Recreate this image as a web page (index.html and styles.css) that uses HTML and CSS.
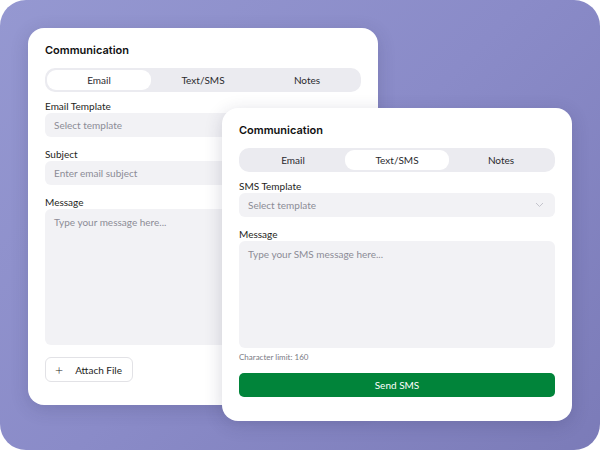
FILE: index.html
```html
<!DOCTYPE html>
<html>

<head>
    <title>Communication</title>
    <meta charset="utf-8">
    <link rel="stylesheet" href="styles.css">
</head>

<body>
    <div class="stage">
        <div class="card card-email">
            <h2 class="card-title">Communication</h2>
            <div class="tabs">
                <div class="tab active">Email</div>
                <div class="tab">Text/SMS</div>
                <div class="tab">Notes</div>
            </div>
            <label class="field-label first">Email Template</label>
            <div class="input">Select template</div>
            <label class="field-label">Subject</label>
            <div class="input">Enter email subject</div>
            <label class="field-label">Message</label>
            <div class="input textarea email-body">Type your message here...</div>
            <button class="attach-button" type="button"><span class="plus">+</span>Attach File</button>
        </div>

        <div class="card card-sms">
            <h2 class="card-title">Communication</h2>
            <div class="tabs">
                <div class="tab">Email</div>
                <div class="tab active">Text/SMS</div>
                <div class="tab">Notes</div>
            </div>
            <label class="field-label first">SMS Template</label>
            <div class="input select">
                <span>Select template</span>
                <svg class="chevron" width="9" height="6" viewBox="0 0 9 6">
                    <path d="M1 1l3.5 3.5L8 1" fill="none" stroke="#c4c4cc" stroke-width="1" />
                </svg>
            </div>
            <label class="field-label">Message</label>
            <div class="input textarea sms-body">Type your SMS message here...</div>
            <div class="hint">Character limit: 160</div>
            <button class="send-button" type="button">Send SMS</button>
        </div>
    </div>
</body>

</html>
```

FILE: styles.css
```css
:root {
    --card_width: 350px;
    --card_pad: 17px;
    --input_bg: #f2f2f5;
    --tab_bg: #ebebf0;
    --text_color: #1c1c1e;
    --muted_color: #8c8c96;
    --green: #01843a;
}

body {
    margin: 0px;
    background: #ffffff;
    font-family: Lato, "Noto Sans", sans-serif;
    color: var(--text_color);
}

.stage {
    position: relative;
    width: 600px;
    height: 450px;
    border-radius: 26px;
    overflow: hidden;
    background: linear-gradient(135deg, #9598d1 0%, #8a8bc8 50%, #7b7bb8 100%);
}

.card {
    position: absolute;
    width: var(--card_width);
    box-sizing: border-box;
    padding: 14px var(--card_pad) 0 var(--card_pad);
    background: #ffffff;
    border-radius: 16px;
    box-shadow: 0 4px 18px rgba(40, 40, 80, 0.18);
}

.card-email {
    left: 28px;
    top: 28px;
    height: 377px;
}

.card-sms {
    left: 222px;
    top: 108px;
    height: 313px;
}

.card-title {
    margin: 0;
    font-family: Inter, sans-serif;
    font-size: 11px;
    font-weight: 600;
    line-height: 16px;
    color: #111111;
}

.tabs {
    display: flex;
    margin-top: 10px;
    padding: 2px;
    height: 24px;
    box-sizing: border-box;
    background: var(--tab_bg);
    border-radius: 10px;
}

.tab {
    flex: 1;
    display: flex;
    align-items: center;
    justify-content: center;
    font-size: 10px;
    color: #2a2a2e;
    border-radius: 9px;
}

.tab.active {
    background: #ffffff;
}

.field-label {
    display: block;
    margin-top: 11px;
    font-size: 10px;
    line-height: 13px;
    color: #1e1e22;
}

.field-label.first {
    margin-top: 8px;
}

.input {
    display: flex;
    align-items: center;
    height: 24px;
    box-sizing: border-box;
    padding: 0 9px;
    background: var(--input_bg);
    border-radius: 6px;
    font-size: 10px;
    color: var(--muted_color);
}

.select {
    justify-content: space-between;
}

.chevron {
    margin-right: 2px;
}

.textarea {
    align-items: flex-start;
    padding-top: 7px;
}

.email-body {
    height: 136px;
}

.sms-body {
    height: 107px;
}

.hint {
    margin-top: 3px;
    font-size: 8px;
    line-height: 12px;
    color: #7a7a84;
}

.attach-button {
    display: flex;
    align-items: center;
    margin-top: 12px;
    height: 25px;
    padding: 0 10px 0 9px;
    background: #ffffff;
    border: 1px solid #e2e2e6;
    border-radius: 6px;
    font-family: Lato, sans-serif;
    font-size: 10px;
    color: #1e1e22;
}

.plus {
    font-size: 14px;
    font-weight: 300;
    margin-right: 12px;
    line-height: 1;
}

.send-button {
    display: block;
    width: 100%;
    margin-top: 10px;
    height: 24px;
    border: none;
    border-radius: 5px;
    background: var(--green);
    color: #ffffff;
    font-family: Lato, sans-serif;
    font-size: 10px;
}
```
